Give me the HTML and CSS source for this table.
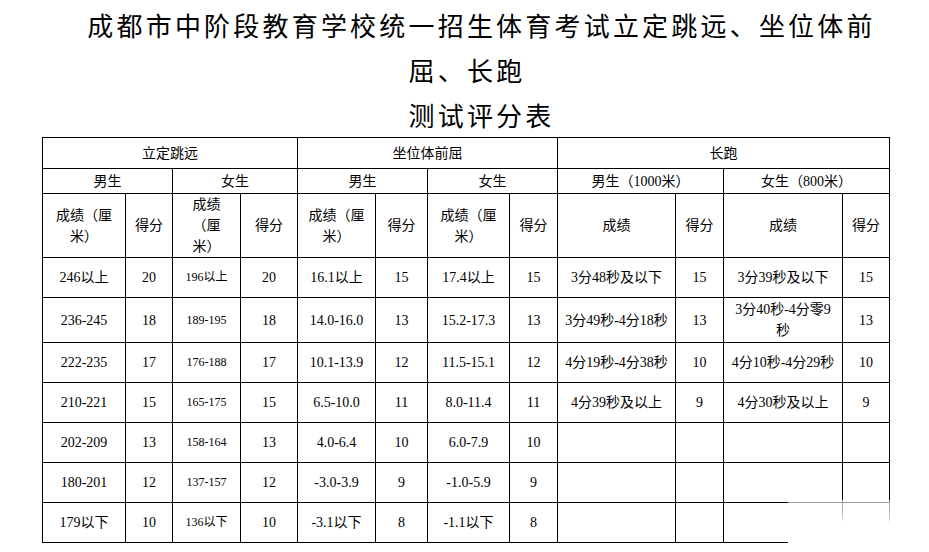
FILE: index.html
```html
<!DOCTYPE html>
<html lang="zh-CN">
<head>
<meta charset="utf-8">
<title>测试评分表</title>
<link rel="stylesheet" href="styles.css">
</head>
<body>
<div class="page">
  <div class="title">
    <div class="title-line">成都市中阶段教育学校统一招生体育考试立定跳远、坐位体前</div>
    <div class="title-line title-line--short">屈、长跑</div>
    <div class="title-line">测试评分表</div>
  </div>
  <table class="score">
    <colgroup>
      <col class="c83"><col class="c47"><col class="c68"><col class="c57">
      <col class="c78"><col class="c52"><col class="c82"><col class="c48">
      <col class="c118"><col class="c48"><col class="c119"><col class="c47">
    </colgroup>
    <tr class="h1">
      <td colspan="4">立定跳远</td>
      <td colspan="4">坐位体前屈</td>
      <td colspan="4">长跑</td>
    </tr>
    <tr class="h2">
      <td colspan="2">男生</td>
      <td colspan="2">女生</td>
      <td colspan="2">男生</td>
      <td colspan="2">女生</td>
      <td colspan="2">男生（1000米）</td>
      <td colspan="2">女生（800米）</td>
    </tr>
    <tr class="h3">
      <td>成绩（厘米）</td><td>得分</td>
      <td>成绩（厘米）</td><td>得分</td>
      <td>成绩（厘米）</td><td>得分</td>
      <td>成绩（厘米）</td><td>得分</td>
      <td>成绩</td><td>得分</td>
      <td>成绩</td><td>得分</td>
    </tr>
    <tr class="row">
      <td>246以上</td><td>20</td><td class="sm">196以上</td><td>20</td>
      <td>16.1以上</td><td>15</td><td>17.4以上</td><td>15</td>
      <td>3分48秒及以下</td><td>15</td><td>3分39秒及以下</td><td>15</td>
    </tr>
    <tr class="row">
      <td>236-245</td><td>18</td><td class="sm">189-195</td><td>18</td>
      <td>14.0-16.0</td><td>13</td><td>15.2-17.3</td><td>13</td>
      <td>3分49秒-4分18秒</td><td>13</td><td>3分40秒-4分零9秒</td><td>13</td>
    </tr>
    <tr class="row">
      <td>222-235</td><td>17</td><td class="sm">176-188</td><td>17</td>
      <td>10.1-13.9</td><td>12</td><td>11.5-15.1</td><td>12</td>
      <td>4分19秒-4分38秒</td><td>10</td><td>4分10秒-4分29秒</td><td>10</td>
    </tr>
    <tr class="row">
      <td>210-221</td><td>15</td><td class="sm">165-175</td><td>15</td>
      <td>6.5-10.0</td><td>11</td><td>8.0-11.4</td><td>11</td>
      <td>4分39秒及以上</td><td>9</td><td>4分30秒及以上</td><td>9</td>
    </tr>
    <tr class="row">
      <td>202-209</td><td>13</td><td class="sm">158-164</td><td>13</td>
      <td>4.0-6.4</td><td>10</td><td>6.0-7.9</td><td>10</td>
      <td></td><td></td><td></td><td></td>
    </tr>
    <tr class="row">
      <td>180-201</td><td>12</td><td class="sm">137-157</td><td>12</td>
      <td>-3.0-3.9</td><td>9</td><td>-1.0-5.9</td><td>9</td>
      <td></td><td></td><td></td><td></td>
    </tr>
    <tr class="row">
      <td>179以下</td><td>10</td><td class="sm">136以下</td><td>10</td>
      <td>-3.1以下</td><td>8</td><td>-1.1以下</td><td>8</td>
      <td></td><td></td><td></td><td></td>
    </tr>
  </table>
  <div class="fade"></div>
</div>
</body>
</html>
```

FILE: styles.css
```css
html, body {
  margin: 0;
  padding: 0;
  background: #fff;
}

.page {
  position: relative;
  width: 929px;
  height: 552px;
  overflow: hidden;
  color: #000;
  text-spacing-trim: space-all;
}

.title {
  margin: 2px 0 0 42px;
  width: 847px;
  padding-left: 32px;
  box-sizing: border-box;
  text-align: center;
  font-family: "Noto Sans CJK SC", sans-serif;
  font-size: 26px;
  letter-spacing: 3.2px;
  line-height: 45px;
  white-space: nowrap;
}

.title-line--short {
  padding-right: 29px;
}

.score {
  margin-left: 42px;
  width: 847px;
  table-layout: fixed;
  border-collapse: collapse;
  font-family: "Liberation Serif", "Noto Sans CJK SC", serif;
  font-size: 14px;
  line-height: 21px;
  text-spacing-trim: space-all;
}

.score td {
  border: 1px solid #000;
  padding: 1px 7px;
  text-align: center;
  vertical-align: middle;
}

.score .h3 td {
  padding-top: 0;
  padding-bottom: 0;
}

.c83 { width: 83px; }
.c47 { width: 47px; }
.c68 { width: 68px; }
.c57 { width: 57px; }
.c78 { width: 78px; }
.c52 { width: 52px; }
.c82 { width: 82px; }
.c48 { width: 48px; }
.c118 { width: 118px; }
.c119 { width: 119px; }

.h1 { height: 31px; }
.h2 { height: 25px; }
.h3 { height: 64px; }
.row { height: 40px; }

.score td.sm {
  font-size: 12px;
}

.fade {
  position: absolute;
  left: 788px;
  top: 500px;
  width: 141px;
  height: 52px;
  background: linear-gradient(to bottom, rgba(255,255,255,0.6) 0%, rgba(255,255,255,0.75) 30%, #fff 45%, #fff 100%);
}
```
